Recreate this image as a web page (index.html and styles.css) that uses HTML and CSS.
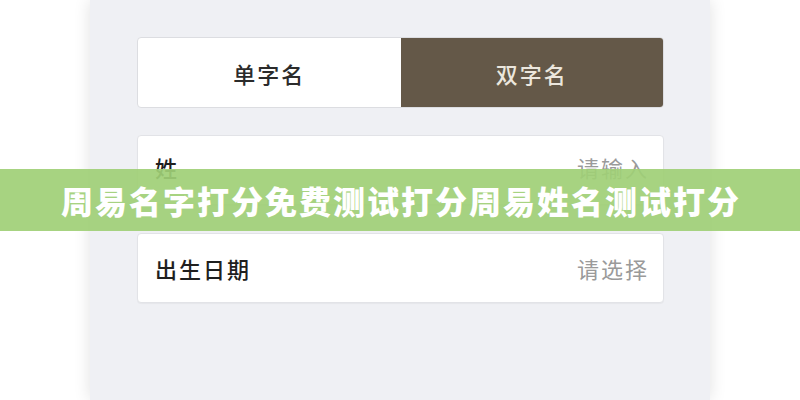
FILE: index.html
```html
<!DOCTYPE html>
<html lang="zh">
<head>
<meta charset="utf-8">
<link rel="stylesheet" href="styles.css">
</head>
<body>
<div class="page">
  <div class="panel">
    <div class="segment">
      <div class="seg-item">单字名</div>
      <div class="seg-item active">双字名</div>
    </div>
    <div class="card card-first">
      <span class="label">姓</span>
      <span class="placeholder">请输入</span>
    </div>
    <div class="card card-second">
      <span class="label">出生日期</span>
      <span class="placeholder">请选择</span>
    </div>
  </div>
  <div class="banner">周易名字打分免费测试打分周易姓名测试打分</div>
</div>
</body>
</html>
```
FILE: styles.css
```css
html, body {
  margin: 0;
  padding: 0;
  background: #ffffff;
  font-family: "Noto Sans CJK SC", "Noto Sans", sans-serif;
}
.page {
  position: relative;
  width: 800px;
  height: 400px;
  overflow: hidden;
  display: flex;
  justify-content: center;
  background: #ffffff;
}
.panel {
  width: 620px;
  height: 400px;
  box-sizing: border-box;
  padding: 37px 46px 0 47px;
  background: #eff0f4;
  box-shadow: 0 0 16px rgba(0, 0, 0, 0.12);
  display: flex;
  flex-direction: column;
}
.segment {
  display: flex;
  height: 71px;
  border-radius: 4px;
  overflow: hidden;
  border: 1px solid #dcdde1;
  box-sizing: border-box;
  background: #ffffff;
}
.seg-item {
  flex: 1;
  display: flex;
  align-items: center;
  justify-content: center;
  font-size: 22px;
  font-weight: 500;
  letter-spacing: 2px;
  color: #2b2b2b;
}
.seg-item.active {
  background: #645848;
  color: #ebe6dd;
}
.card {
  margin-top: 27px;
  height: 70px;
  box-sizing: border-box;
  background: #ffffff;
  border: 1px solid #e2e3e7;
  border-radius: 4px;
  box-shadow: 0 1px 1px rgba(0, 0, 0, 0.04);
  display: flex;
  align-items: center;
  justify-content: space-between;
  padding: 0 14px 0 17px;
  font-size: 22px;
  letter-spacing: 2px;
}
.card-first {
  padding-bottom: 6px;
}
.card-second {
  margin-top: 28px;
}
.label {
  color: #1f1f1f;
  font-weight: 500;
}
.placeholder {
  color: #9a9a9a;
}
.banner {
  position: absolute;
  left: 0;
  top: 169px;
  width: 800px;
  height: 62px;
  background: rgba(160, 207, 118, 0.92);
  color: #ffffff;
  font-size: 32px;
  font-weight: 900;
  letter-spacing: 2px;
  display: flex;
  align-items: center;
  justify-content: center;
  padding-left: 2px;
  box-sizing: border-box;
}
```
